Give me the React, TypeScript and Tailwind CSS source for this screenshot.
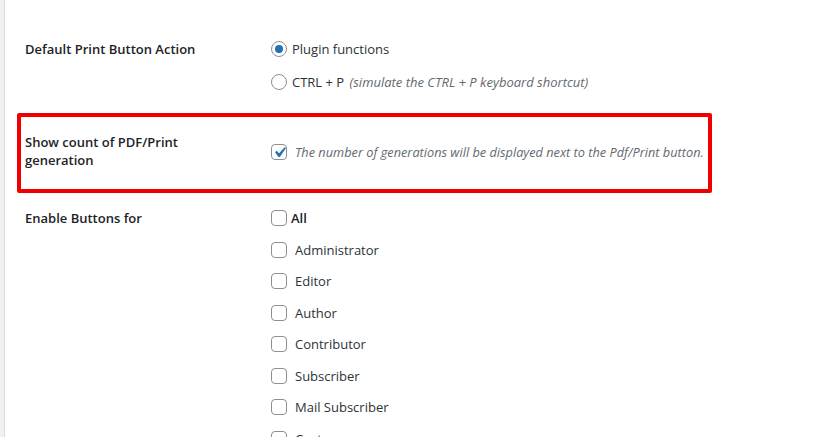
import React from "react";

const Check = () => (
    <svg viewBox="0 0 20 20" className="absolute -left-[3px] -top-[3px] h-[21px] w-[21px]">
        <path d="M14.83 4.89l1.34.94-5.81 8.38H9.02L5.78 9.67l1.34-1.25 2.57 2.4z" fill="#2271b1" />
    </svg>
);

const Box = ({ checked = false }: { checked?: boolean }) => (
    <span className="relative inline-block h-4 w-4 shrink-0 rounded-[4px] border border-[#8c8f94] bg-white">
        {checked && <Check />}
    </span>
);

const Radio = ({ checked = false }: { checked?: boolean }) => (
    <span className="flex h-4 w-4 shrink-0 items-center justify-center rounded-full border border-[#8c8f94] bg-white">
        {checked && <span className="h-2 w-2 rounded-full bg-[#2271b1]" />}
    </span>
);

const roles = ["Administrator", "Editor", "Author", "Contributor", "Subscriber", "Mail Subscriber", "Customer"];

export default function App() {
    return (
        <div className="flex h-[437px] w-[838px] overflow-hidden bg-white text-[13px] leading-[18px] text-[#2c3338] font-['Open_Sans',sans-serif]">
            <div className="w-[5px] shrink-0 border-r border-[#dcdcde] bg-[#f0f0f1]" />
            <div className="flex-1 pl-[20px] pt-[40px]">
                {/* print action */}
                <div className="flex">
                    <div className="w-[246px] shrink-0 font-semibold text-[#1d2327]">Default Print Button Action</div>
                    <div className="flex flex-col gap-[15px]">
                        <label className="flex h-[18px] items-center gap-[5px]">
                            <Radio checked />
                            <span>Plugin functions</span>
                        </label>
                        <label className="flex h-[18px] items-center gap-[5px]">
                            <Radio />
                            <span className="whitespace-nowrap">
                                CTRL + P <i className="ml-[2px] text-[#646970]">(simulate the CTRL + P keyboard shortcut)</i>
                            </span>
                        </label>
                    </div>
                </div>

                {/* highlighted row */}
                <div className="-ml-[8px] mt-[22px] flex w-[695px] rounded-[2px] border-4 border-[#f00000] pb-[20px] pl-[4px] pt-[16px]">
                    <div className="w-[246px] shrink-0 pr-[60px] font-semibold text-[#1d2327]">Show count of PDF/Print generation</div>
                    <label className="mt-[10px] flex h-[18px] shrink-0 items-center gap-[8px]">
                        <Box checked />
                        <i className="whitespace-nowrap text-[12.75px] text-[#646970]">The number of generations will be displayed next to the Pdf/Print button.</i>
                    </label>
                </div>

                {/* roles */}
                <div className="mt-[16px] flex">
                    <div className="w-[246px] shrink-0 font-semibold text-[#1d2327]">Enable Buttons for</div>
                    <div className="flex flex-col gap-[13.5px]">
                        <label className="flex h-[18px] items-center gap-[4px]">
                            <Box />
                            <span className="font-semibold text-[#1d2327]">All</span>
                        </label>
                        {roles.map((r) => (
                            <label key={r} className="flex h-[18px] items-center gap-[8px]">
                                <Box />
                                <span>{r}</span>
                            </label>
                        ))}
                    </div>
                </div>
            </div>
        </div>
    );
}
